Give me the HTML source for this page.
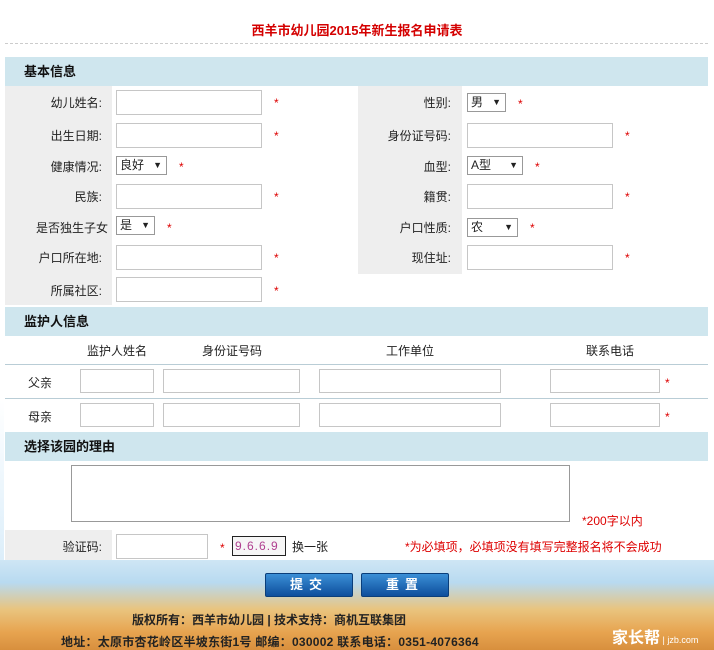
<!DOCTYPE html>
<html><head><meta charset="utf-8"><style>
*{margin:0;padding:0;box-sizing:border-box}
body{width:714px;height:650px;position:relative;overflow:hidden;background:#fff;font-family:"Liberation Sans","Noto Sans CJK SC","WenQuanYi Zen Hei",sans-serif;font-size:12px;color:#222}
.a{position:absolute}
.hd{position:absolute;left:5px;width:703px;height:29px;background:#cfe6ee;font-weight:bold;font-size:13px;line-height:29px;padding-left:19px;color:#111}
.in{position:absolute;height:25px;border:1px solid #c6c6c6;background:#fff}
.sel{position:absolute;height:19px;border:1px solid #999;background:#fff;font-size:12px;line-height:17px;padding-left:3px}
.sel:after{content:"▼";position:absolute;right:4px;top:0;font-size:9px}
.st{position:absolute;color:#d00;font-size:12px}
.lb{position:absolute;text-align:right;font-size:12px}
.g{position:absolute;background:#eeeeee}
</style></head><body>
<div class="a" style="left:0;right:0;top:20px;text-align:center;color:#d40000;font-weight:bold;font-size:13px">西羊市幼儿园2015年新生报名申请表</div>
<div class="a" style="left:5px;width:703px;top:43px;border-top:1px dashed #ccc"></div>
<div class="hd" style="top:57px">基本信息</div>
<div class="g" style="left:5px;top:86px;width:107px;height:219px"></div>
<div class="g" style="left:358px;top:86px;width:104px;height:188px"></div>

<div class="lb" style="left:5px;width:97px;top:94px">幼儿姓名:</div><div class="in" style="left:116px;top:90px;width:146px"></div><div class="st" style="left:274px;top:96px">*</div>
<div class="lb" style="left:5px;width:97px;top:127px">出生日期:</div><div class="in" style="left:116px;top:123px;width:146px"></div><div class="st" style="left:274px;top:129px">*</div>
<div class="lb" style="left:5px;width:97px;top:158px">健康情况:</div><div class="sel" style="left:116px;top:156px;width:51px">良好</div><div class="st" style="left:179px;top:160px">*</div>
<div class="lb" style="left:5px;width:97px;top:188px">民族:</div><div class="in" style="left:116px;top:184px;width:146px"></div><div class="st" style="left:274px;top:190px">*</div>
<div class="lb" style="left:5px;width:103px;top:219px">是否独生子女</div><div class="sel" style="left:116px;top:216px;width:39px">是</div><div class="st" style="left:167px;top:221px">*</div>
<div class="lb" style="left:5px;width:97px;top:249px">户口所在地:</div><div class="in" style="left:116px;top:245px;width:146px"></div><div class="st" style="left:274px;top:251px">*</div>
<div class="lb" style="left:5px;width:97px;top:282px">所属社区:</div><div class="in" style="left:116px;top:277px;width:146px"></div><div class="st" style="left:274px;top:284px">*</div>

<div class="lb" style="left:358px;width:93px;top:94px">性别:</div><div class="sel" style="left:467px;top:93px;width:39px">男</div><div class="st" style="left:518px;top:97px">*</div>
<div class="lb" style="left:358px;width:93px;top:127px">身份证号码:</div><div class="in" style="left:467px;top:123px;width:146px"></div><div class="st" style="left:625px;top:129px">*</div>
<div class="lb" style="left:358px;width:93px;top:158px">血型:</div><div class="sel" style="left:467px;top:156px;width:56px">A型</div><div class="st" style="left:535px;top:160px">*</div>
<div class="lb" style="left:358px;width:93px;top:188px">籍贯:</div><div class="in" style="left:467px;top:184px;width:146px"></div><div class="st" style="left:625px;top:190px">*</div>
<div class="lb" style="left:358px;width:93px;top:219px">户口性质:</div><div class="sel" style="left:467px;top:218px;width:51px">农</div><div class="st" style="left:530px;top:221px">*</div>
<div class="lb" style="left:358px;width:93px;top:249px">现住址:</div><div class="in" style="left:467px;top:245px;width:146px"></div><div class="st" style="left:625px;top:251px">*</div>

<div class="hd" style="top:307px">监护人信息</div>
<div class="a" style="left:87px;top:342px">监护人姓名</div>
<div class="a" style="left:202px;top:342px">身份证号码</div>
<div class="a" style="left:386px;top:342px">工作单位</div>
<div class="a" style="left:586px;top:342px">联系电话</div>
<div class="a" style="left:5px;width:703px;top:364px;border-top:1px solid #b9cdd6"></div>
<div class="a" style="left:5px;width:703px;top:398px;border-top:1px solid #b9cdd6"></div>
<div class="a" style="left:28px;top:374px">父亲</div>
<div class="in" style="left:80px;top:369px;width:74px;height:24px"></div><div class="in" style="left:163px;top:369px;width:137px;height:24px"></div><div class="in" style="left:319px;top:369px;width:182px;height:24px"></div><div class="in" style="left:550px;top:369px;width:110px;height:24px"></div><div class="st" style="left:665px;top:376px">*</div>
<div class="a" style="left:28px;top:408px">母亲</div>
<div class="in" style="left:80px;top:403px;width:74px;height:24px"></div><div class="in" style="left:163px;top:403px;width:137px;height:24px"></div><div class="in" style="left:319px;top:403px;width:182px;height:24px"></div><div class="in" style="left:550px;top:403px;width:110px;height:24px"></div><div class="st" style="left:665px;top:410px">*</div>

<div class="hd" style="top:432px">选择该园的理由</div>
<div class="a" style="left:71px;top:465px;width:499px;height:57px;border:1px solid #999"></div>
<div class="st" style="left:582px;top:512px">*200字以内</div>

<div class="a" style="left:0;top:560px;width:714px;height:90px;background:linear-gradient(180deg,#cfe6f5 0%,#b8daf0 25%,#e9c47e 55%,#e7a450 80%,#d88f3d 100%)"></div>
<div class="a" style="left:0;top:400px;width:4px;height:160px;background:linear-gradient(180deg,#fff,#dceefa)"></div>
<div class="a" style="left:5px;top:530px;width:703px;height:30px;background:#fff"></div>
<div class="g" style="left:5px;top:530px;width:107px;height:30px"></div>
<div class="lb" style="left:5px;width:97px;top:538px">验证码:</div>
<div class="in" style="left:116px;top:534px;width:92px;height:25px"></div>
<div class="st" style="left:220px;top:541px">*</div>
<div class="a" style="left:232px;top:536px;width:54px;height:20px;border:1px solid #222;background:#f6f6f6;color:#b04090;font-size:12px;letter-spacing:1px;padding-left:2px;line-height:18px;overflow:hidden;white-space:nowrap">9.6.6.9</div>
<div class="a" style="left:292px;top:538px">换一张</div>
<div class="st" style="left:405px;top:538px">*为必填项，必填项没有填写完整报名将不会成功</div>

<div class="a" style="left:265px;top:573px;width:88px;height:24px;background:linear-gradient(#3b8fd6,#0d4e9c);border:1px solid #0a3e7a;border-radius:2px;color:#fff;font-weight:bold;font-size:13px;text-align:center;line-height:22px;letter-spacing:6px">提交</div>
<div class="a" style="left:361px;top:573px;width:88px;height:24px;background:linear-gradient(#3b8fd6,#0d4e9c);border:1px solid #0a3e7a;border-radius:2px;color:#fff;font-weight:bold;font-size:13px;text-align:center;line-height:22px;letter-spacing:6px">重置</div>
<div class="a" style="left:132px;top:611px;font-weight:bold;font-size:12px;color:#222">版权所有：西羊市幼儿园 | 技术支持：商机互联集团</div>
<div class="a" style="left:61px;top:633px;font-weight:bold;font-size:12px;color:#222;letter-spacing:0.25px">地址：太原市杏花岭区半坡东街1号 邮编：030002 联系电话：0351-4076364</div>
<div class="a" style="left:612px;top:624px;color:#fff;font-weight:bold;font-size:16px">家长帮<span style="font-size:9px;font-weight:normal"> | jzb.com</span></div>
</body></html>
